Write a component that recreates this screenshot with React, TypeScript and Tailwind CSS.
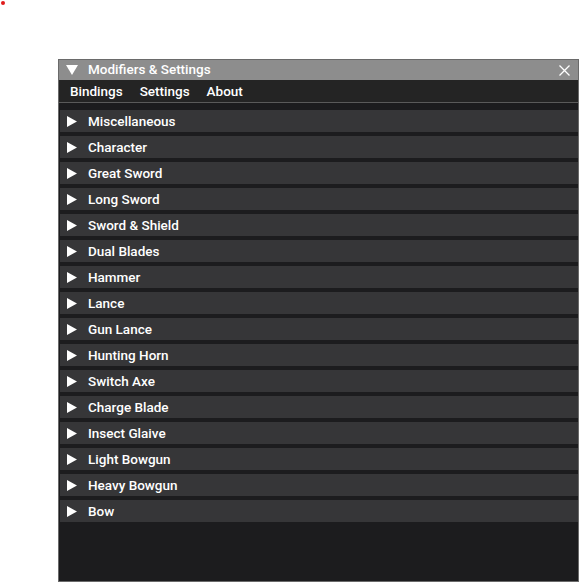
import React from 'react';

const sections = [
  'Miscellaneous',
  'Character',
  'Great Sword',
  'Long Sword',
  'Sword & Shield',
  'Dual Blades',
  'Hammer',
  'Lance',
  'Gun Lance',
  'Hunting Horn',
  'Switch Axe',
  'Charge Blade',
  'Insect Glaive',
  'Light Bowgun',
  'Heavy Bowgun',
  'Bow',
];

const RightArrow = () => (
  <svg width="10" height="11" viewBox="0 0 10 11" className="shrink-0">
    <path d="M0 0 L10 5.5 L0 11 Z" fill="#ffffff" />
  </svg>
);

const DownArrow = () => (
  <svg width="12" height="10" viewBox="0 0 12 10" className="shrink-0">
    <path d="M0 0 L12 0 L6 10 Z" fill="#ffffff" />
  </svg>
);

export default function App() {
  return (
    <div
      className="relative w-[579px] h-[583px] bg-white overflow-hidden pl-[58px] pt-[59px]"
      style={{ fontFamily: 'Roboto, "Noto Sans", sans-serif' }}
    >
      {/* stray marker dot */}
      <div className="absolute left-[1px] top-[1px] w-[4px] h-[4px] rounded-full bg-[#e01b1b]" />

      <div className="w-[521px] h-[523px] border border-[#6a6a6a] bg-[#1c1c1e] flex flex-col">
        {/* Title bar */}
        <div className="h-[20px] bg-[#8d8d8d] flex items-center pl-[7px] pr-[8px] text-white text-[13.5px] font-medium">
          <DownArrow />
          <span className="ml-[10px] leading-none">Modifiers &amp; Settings</span>
          <svg width="11" height="11" viewBox="0 0 11 11" className="ml-auto">
            <path d="M0.5 0.5 L10.5 10.5 M10.5 0.5 L0.5 10.5" stroke="#ffffff" strokeWidth="1.3" />
          </svg>
        </div>

        {/* Menu bar */}
        <div className="h-[23px] bg-[#242424] border-b border-[#5a5a5a] flex items-center gap-[17px] pl-[11px] text-white text-[13.5px] font-medium">
          <span>Bindings</span>
          <span>Settings</span>
          <span>About</span>
        </div>

        {/* Collapsing headers */}
        <div className="flex-1 flex flex-col gap-[4px] pt-[7px] pl-px">
          {sections.map((name) => (
            <div
              key={name}
              className="h-[22px] bg-[#363638] flex items-center pl-[7px] text-white text-[13.5px] font-medium"
            >
              <RightArrow />
              <span className="ml-[11px]">{name}</span>
            </div>
          ))}
        </div>
      </div>
    </div>
  );
}
